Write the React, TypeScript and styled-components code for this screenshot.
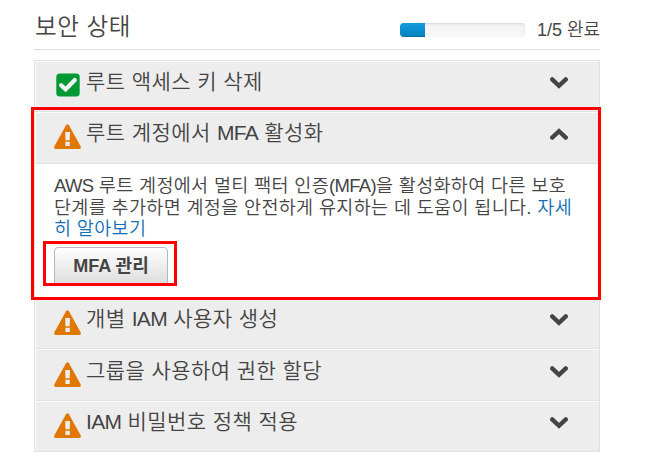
import React from "react";
import styled, { createGlobalStyle } from "styled-components";

const GlobalStyle = createGlobalStyle`
  * { box-sizing: border-box; }
  body {
    margin: 0;
    background: #fff;
    color: #444;
    font-family: "Liberation Sans", "Noto Sans CJK KR", sans-serif;
  }
`;

const Page = styled.main`
  position: relative;
  width: 646px;
  height: 476px;
  padding-left: 34px;
  overflow: hidden;
`;

const Header = styled.header`
  display: flex;
  align-items: center;
  width: 566px;
  height: 50px;
  border-bottom: 1px solid #ddd;
`;

const Title = styled.h1`
  flex: 1;
  margin: 4px 0 0 1px;
  font-size: 23.5px;
  font-weight: 350;
  line-height: 30px;
  letter-spacing: 0.6px;
  white-space: nowrap;
`;

const Track = styled.div`
  width: 125px;
  height: 14px;
  margin-top: 11px;
  overflow: hidden;
  border-radius: 4px;
  background: linear-gradient(#f2f2f2, #f8f8f8);
  box-shadow: inset 0 1px 2px rgba(0, 0, 0, 0.12);
`;

const Fill = styled.div`
  width: 20%;
  height: 100%;
  background: linear-gradient(#149bdf, #0480be);
  box-shadow: inset 0 -1px 0 rgba(0, 0, 0, 0.15);
`;

const Count = styled.span`
  width: 63px;
  margin: 11px 0 0 12px;
  font-size: 18px;
  font-weight: 350;
  line-height: 24px;
  white-space: nowrap;
`;

const Panel = styled.section`
  width: 566px;
  height: 392px;
  margin-top: 10px;
  border: 1px solid #e2e2e2;
`;

const Row = styled.div<{ $height: number; $inset: number; $last?: boolean }>`
  display: flex;
  align-items: flex-start;
  height: ${(p) => p.$height}px;
  padding: ${(p) => p.$inset}px 31px 0 18px;
  border-top: 1px solid #fafafa;
  border-left: 1px solid #fafafa;
  border-bottom: ${(p) => (p.$last ? "none" : "1px solid #e2e2e2")};
  background: #ededed;
`;

const IconSlot = styled.span`
  display: flex;
  justify-content: center;
  width: 27px;
  height: 25px;
  svg { display: block; }
`;

const Label = styled.span`
  flex: 1;
  margin: -6px 0 0 5px;
  font-size: 21px;
  font-weight: 350;
  line-height: 30px;
  letter-spacing: 0.42px;
  white-space: nowrap;
`;

const Latin = styled.span`
  letter-spacing: -0.7px;
`;

const Chevron = styled.svg<{ $up?: boolean }>`
  display: block;
  width: 18px;
  height: 12px;
  margin-top: 4px;
  transform: ${(p) => (p.$up ? "scaleY(-1)" : "none")};
`;

const Details = styled.div`
  height: 133px;
  padding: 11px 0 0 19px;
`;

const Line = styled.p`
  margin: 0;
  height: 21.6px;
  font-size: 18.5px;
  font-weight: 350;
  line-height: 22px;
  letter-spacing: 0.34px;
  white-space: nowrap;
`;

const Link = styled.a`
  color: #146eb4;
  text-decoration: none;
`;

const ManageButton = styled.button`
  display: block;
  width: 114px;
  height: 39px;
  margin-top: 7px;
  padding: 0;
  border: 1px solid #b8b8b8;
  border-radius: 4px;
  background: linear-gradient(#fff, #dcdcdc);
  color: #444;
  font: bold 18px/37px "Liberation Sans", "Noto Sans CJK KR", sans-serif;
  white-space: nowrap;
`;

const Highlight = styled.div<{ $x: number; $y: number; $w: number; $h: number }>`
  position: absolute;
  left: ${(p) => p.$x}px;
  top: ${(p) => p.$y}px;
  width: ${(p) => p.$w}px;
  height: ${(p) => p.$h}px;
  border: 3px solid #f00;
  pointer-events: none;
`;

const Warning = () => (
  <svg width="27" height="25" viewBox="0 0 27 25">
    <path d="M12 1.2Q13.5-.9 15 1.2L26.6 22.2Q27.5 25 25 25H2Q-.5 25 .4 22.2Z" fill="#e07700" />
    <path d="M11.2 8h4.8l-.3 8.3h-4.2zM11.4 17.7h4.4v4.2h-4.4z" fill="#ededed" />
  </svg>
);

const Check = () => (
  <svg width="24" height="24" viewBox="0 0 24 24">
    <rect x=".3" y=".5" width="23.4" height="23" rx="3.5" fill="#009933" />
    <path d="M5.1 12.2 9.6 16.4 18.8 7" fill="none" stroke="#f3f3f3" strokeWidth="4.2" strokeLinecap="round" />
  </svg>
);

type ItemProps = {
  children: React.ReactNode;
  height: number;
  inset?: number;
  done?: boolean;
  open?: boolean;
  last?: boolean;
};

const Item = ({ children, height, inset = 11, done, open, last }: ItemProps) => (
  <Row $height={height} $inset={inset} $last={last}>
    <IconSlot>{done ? <Check /> : <Warning />}</IconSlot>
    <Label>{children}</Label>
    <Chevron $up={open} viewBox="0 0 18 12">
      <path d="M2.2 2.4 9 8.8 15.8 2.4" fill="none" stroke="#444" strokeWidth="4.3" strokeLinecap="round" />
    </Chevron>
  </Row>
);

export default function App() {
  return (
    <>
      <GlobalStyle />
      <Page>
        <Header>
          <Title>보안 상태</Title>
          <Track><Fill /></Track>
          <Count>1/5 완료</Count>
        </Header>
        <Panel>
          <Item height={51} done>루트 액세스 키 삭제</Item>
          <Item height={52} open>루트 계정에서 <Latin>MFA</Latin> 활성화</Item>
          <Details>
            <Line><Latin>AWS</Latin> 루트 계정에서 멀티 팩터 인증<Latin>(MFA)</Latin>을 활성화하여 다른 보호</Line>
            <Line>단계를 추가하면 계정을 안전하게 유지하는 데 도움이 됩니다. <Link>자세</Link></Line>
            <Line><Link>히 알아보기</Link></Line>
            <ManageButton>MFA 관리</ManageButton>
          </Details>
          <Item height={52} inset={12}>개별 <Latin>IAM</Latin> 사용자 생성</Item>
          <Item height={52} inset={12}>그룹을 사용하여 권한 할당</Item>
          <Item height={50} last><Latin>IAM</Latin> 비밀번호 정책 적용</Item>
        </Panel>
        <Highlight $x={31} $y={107} $w={570} $h={193} />
        <Highlight $x={43} $y={241} $w={134} $h={45} />
      </Page>
    </>
  );
}
